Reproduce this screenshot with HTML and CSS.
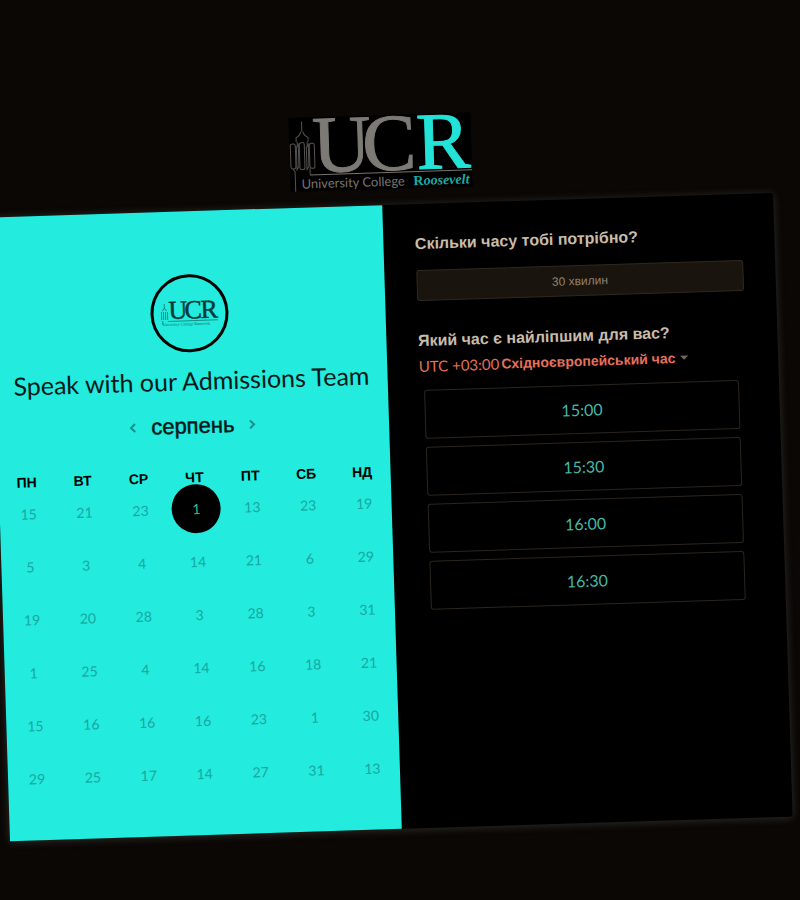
FILE: index.html
```html
<!DOCTYPE html>
<html lang="uk">
<head>
<meta charset="utf-8">
<meta name="viewport" content="width=device-width, initial-scale=1">
<title>University College Roosevelt</title>
<link rel="stylesheet" href="styles.css">
</head>
<body>
<div class="page">
  <header class="brand">
    <svg class="brand-logo" viewBox="0 0 182 74" role="img" aria-label="University College Roosevelt">
      <rect width="182" height="74" fill="#000"/>
      <g fill="none" stroke="#55534f" stroke-width="1">
        <path d="M13 4v10M12 14q-1 4-5 6v4M14 14q1 4 5 6v4M8 24v5M18 24v5"/>
        <rect x="1" y="26" width="5" height="25" rx="2"/>
        <rect x="10" y="25" width="5" height="27" rx="2"/>
        <rect x="20" y="26" width="5" height="25" rx="2"/>
        <path d="M7 30l2-3v22l-2 3zM17 30l2-3v22l-2 3zM3 51l2 3v20M20 51v7"/>
      </g>
      <path d="M20 57.500H182" stroke="#77736e" stroke-width="1"/>
      <g class="serif" font-size="81">
        <text x="23" y="55" fill="#7d7a76" stroke="#7d7a76">U</text>
        <text x="73" y="55" fill="#7d7a76" stroke="#7d7a76">C</text>
        <text x="127" y="55" fill="#23e3d9" stroke="#23e3d9">R</text>
      </g>
      <text class="sans" x="11" y="71" font-size="13" fill="#77736e">University College</text>
      <text class="serif bold" x="123" y="71" font-size="14" fill="#1fa9a1">R<tspan font-style="italic">oosevelt</tspan></text>
    </svg>
  </header>

  <main class="card">
    <section class="calendar">
      <div class="avatar">
        <svg viewBox="0 0 58 26" role="img" aria-label="UCR">
          <g fill="none" stroke="#168f8a" stroke-width="1">
            <path d="M4 3v5M2 10l2-3l2 3M1 11v8M3 11v8M5 11v8M7 11v8M2 20v4M7 20.500h50"/>
          </g>
          <g class="serif" font-size="26" fill="#083a3c" stroke="#083a3c" stroke-width="0.500">
            <text x="8" y="18">U</text>
            <text x="24" y="18">C</text>
            <text x="40" y="18">R</text>
          </g>
          <text class="serif" x="2" y="25" font-size="4" fill="#0c6765">University College Roosevelt</text>
        </svg>
      </div>
      <h1 class="title">Speak with our Admissions Team</h1>
      <div class="month">
        <button class="arrow" type="button" aria-label="Попередній місяць"><svg viewBox="0 0 8 10"><path d="M6 1L2 5l4 4"/></svg></button>
        <h2 class="month-name">серпень</h2>
        <button class="arrow" type="button" aria-label="Наступний місяць"><svg viewBox="0 0 8 10"><path d="M2 1l4 4l-4 4"/></svg></button>
      </div>
      <table class="days">
        <thead>
          <tr><th>ПН</th><th>ВТ</th><th>СР</th><th>ЧТ</th><th>ПТ</th><th>СБ</th><th>НД</th></tr>
        </thead>
        <tbody>
          <tr><td>15</td><td>21</td><td>23</td><td><button class="day-selected" type="button">1</button></td><td>13</td><td>23</td><td>19</td></tr>
          <tr><td>5</td><td>3</td><td>4</td><td>14</td><td>21</td><td>6</td><td>29</td></tr>
          <tr><td>19</td><td>20</td><td>28</td><td>3</td><td>28</td><td>3</td><td>31</td></tr>
          <tr><td>1</td><td>25</td><td>4</td><td>14</td><td>16</td><td>18</td><td>21</td></tr>
          <tr><td>15</td><td>16</td><td>16</td><td>16</td><td>23</td><td>1</td><td>30</td></tr>
          <tr><td>29</td><td>25</td><td>17</td><td>14</td><td>27</td><td>31</td><td>13</td></tr>
        </tbody>
      </table>
    </section>

    <section class="booking">
      <h2 class="question">Скільки часу тобі потрібно?</h2>
      <button class="duration" type="button">30 хвилин</button>
      <h2 class="question">Який час є найліпшим для вас?</h2>
      <div class="zone">
        <label class="zone-offset" for="zone">UTC +03:00</label>
        <select class="zone-select" id="zone"><option>Східноєвропейський час</option></select>
        <svg class="caret" viewBox="0 0 8 4"><path d="M0 0h8L4 4z"/></svg>
      </div>
      <div class="slots">
        <button class="slot" type="button">15:00</button>
        <button class="slot" type="button">15:30</button>
        <button class="slot" type="button">16:00</button>
        <button class="slot" type="button">16:30</button>
      </div>
    </section>
  </main>
</div>
</body>
</html>
```
FILE: styles.css
```css
* {
  box-sizing: border-box;
}

body {
  margin: 0;
  overflow: hidden;
  background: #0b0704;
  font-family: "Liberation Sans", Arial, sans-serif;
}

button,
select {
  margin: 0;
  padding: 0;
  border: 0;
  background: none;
  font: inherit;
  color: inherit;
}

h1,
h2 {
  margin: 0;
}

svg {
  overflow: visible;
}

.page {
  margin-right: 17px;
  padding: 115px 0 71px;
  transform: rotate(-1.8deg);
  transform-origin: 50% 517px;
}

.brand {
  display: flex;
  justify-content: center;
  margin-bottom: 16px;
}

.brand-logo {
  width: 182px;
  height: 74px;
}

.serif {
  font-family: "Liberation Serif", "Times New Roman", serif;
}

.sans {
  font-family: Lato, sans-serif;
}

.bold {
  font-weight: 700;
}

.card {
  display: grid;
  grid-template-columns: 1fr 1fr;
  min-height: 624px;
  border-radius: 3px;
  background: #000;
  box-shadow: 0 1px 8px rgba(100, 105, 105, 0.4);
}

.calendar {
  display: flex;
  flex-direction: column;
  align-items: center;
  padding-top: 63px;
  background: #23ebdd;
  color: #04191a;
}

.avatar {
  display: flex;
  align-items: center;
  justify-content: center;
  width: 78px;
  height: 78px;
  border: 3px solid #000;
  border-radius: 50%;
}

.avatar svg {
  width: 58px;
  height: 26px;
}

.title {
  margin-top: 12px;
  font: 400 25px/32px Lato, sans-serif;
}

.month {
  display: flex;
  align-items: center;
  gap: 14px;
  margin-top: 16px;
}

.month-name {
  font-size: 22px;
  font-weight: 400;
  line-height: 28px;
  -webkit-text-stroke: 0.5px #04191a;
}

.arrow {
  display: flex;
}

.arrow svg {
  width: 8px;
  height: 10px;
  fill: none;
  stroke: #168f8a;
  stroke-width: 2;
}

.days {
  width: 100%;
  margin-top: 32px;
  border-collapse: collapse;
  table-layout: fixed;
  text-align: center;
}

.days th {
  padding: 0;
  color: #000;
  font-size: 14px;
  line-height: 10px;
}

.days td {
  height: 53px;
  padding: 0 0 0 2px;
  font: 14px/16px Lato, sans-serif;
  color: #17a7a1;
}

.day-selected {
  width: 49px;
  height: 49px;
  border-radius: 50%;
  background: #000;
  color: #3fb98f;
}

.booking {
  padding: 28px 32px;
}

.question {
  font-size: 16px;
  line-height: 24px;
  color: #c9bcab;
}

.duration {
  display: block;
  width: 100%;
  height: 31px;
  margin: 14px 0 28px;
  border: 1px solid #30291f;
  border-radius: 3px;
  background: #1a140e;
  color: #8f8371;
  font-size: 12px;
}

.zone {
  display: flex;
  align-items: center;
  gap: 2px;
  height: 26px;
  color: #e8705a;
}

.zone-offset {
  font: 15px/20px Lato, sans-serif;
}

.zone-select {
  appearance: none;
  font-size: 14px;
  font-weight: 700;
}

.caret {
  width: 8px;
  height: 4px;
  margin-left: 2px;
  fill: #75675a;
}

.slots {
  display: flex;
  flex-direction: column;
  gap: 8px;
  margin: 11px 8px 0 4px;
}

.slot {
  height: 49px;
  border: 1px solid #2b251f;
  border-radius: 3px;
  color: #45b8a6;
  font: 16px/20px Lato, sans-serif;
}
```
